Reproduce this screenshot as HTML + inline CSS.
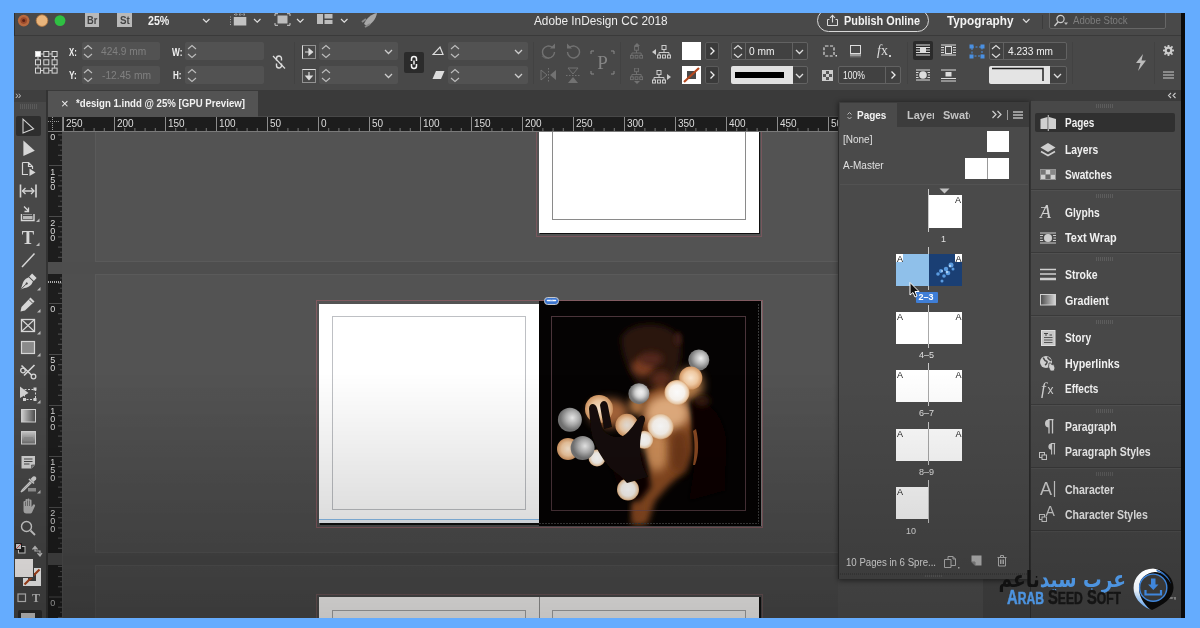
<!DOCTYPE html>
<html><head><meta charset="utf-8"><title>InDesign</title>
<style>
html,body{margin:0;padding:0}
body{width:1200px;height:628px;overflow:hidden;background:#65acfe;font-family:"Liberation Sans",sans-serif;position:relative;color:#e6e6e6;font-size:11px}
.a{position:absolute}
#win{left:14px;top:13px;width:1171px;height:605px;background:#484848;overflow:hidden}
/* coordinates inside #win are offset by (14,13); use wrapper that re-bases to page coords */
#o{position:absolute;left:-14px;top:-13px;width:1200px;height:628px;will-change:transform}
.t{position:absolute;white-space:nowrap;line-height:1}
.b{font-weight:bold}
</style></head><body>
<div id="win" class="a"><div id="o">
<div class="a" style="left:14px;top:13px;width:1171px;height:22px;background:#494949;"></div><div class="a" style="left:14px;top:35px;width:1171px;height:1px;background:#3a3a3a;"></div><div class="a" style="left:14px;top:13px;width:1px;height:23px;background:#303030;"></div><svg class="a" style="left:16px;top:13px;" width="54" height="16" viewBox="0 0 54 16"><circle cx="7.7" cy="7.6" r="5.8" fill="#b8693f"/><circle cx="7.7" cy="7.6" r="3.3" fill="#9a4a2c"/><circle cx="7.7" cy="7.6" r="1.5" fill="#5a2216"/>
<circle cx="26" cy="7.6" r="5.8" fill="#e9b57c"/><circle cx="26" cy="7.6" r="5.8" fill="none" stroke="#b8793f" stroke-width="0.8"/>
<circle cx="44" cy="7.6" r="5.4" fill="#2fc043"/></svg><div class="a" style="left:85px;top:13px;width:14px;height:14px;background:#b9b9b9;"><div class="t" style="left:1.6px;top:2px;font-size:11px;color:#444;font-weight:bold;transform:scaleX(0.843);transform-origin:0 0;">Br</div></div><div class="a" style="left:117px;top:13px;width:15px;height:14px;background:#b9b9b9;"><div class="t" style="left:2.6px;top:2px;font-size:11px;color:#444;font-weight:bold;transform:scaleX(0.891);transform-origin:0 0;">St</div></div><div class="t" style="left:147.5px;top:14.5px;font-size:12px;color:#f0f0f0;font-weight:bold;transform:scaleX(0.887);transform-origin:0 0;">25%</div><svg class="a" style="left:201.5px;top:18px;" width="8.5" height="5.2" viewBox="0 0 8.5 5.2"><path d="M1 1 L4.25 4.2 L7.5 1" fill="none" stroke="#ddd" stroke-width="1.2"/></svg><svg class="a" style="left:229px;top:13px;" width="18" height="14" viewBox="0 0 18 14"><rect x="4.8" y="4" width="12.5" height="8.5" fill="#c2c2c2"/><path d="M5 1.5h12.5" stroke="#aaa" stroke-width="1" stroke-dasharray="1 1.5"/><path d="M1.5 3.5v9" stroke="#aaa" stroke-width="1" stroke-dasharray="1 1.5"/><path d="M7 0v3M11 0v3M15 0v3" stroke="#999" stroke-width="1"/></svg><svg class="a" style="left:252.5px;top:18px;" width="8.5" height="5.2" viewBox="0 0 8.5 5.2"><path d="M1 1 L4.25 4.2 L7.5 1" fill="none" stroke="#ddd" stroke-width="1.2"/></svg><svg class="a" style="left:274px;top:13px;" width="17" height="14" viewBox="0 0 17 14"><rect x="3.5" y="2.5" width="10" height="8" fill="#bdbdbd"/><path d="M1 3V0.7h3M13 0.7h3V3M1 10v2.3h3M13 12.300000000000001h3V10" stroke="#ccc" fill="none" stroke-width="1"/></svg><svg class="a" style="left:295.5px;top:18px;" width="8.5" height="5.2" viewBox="0 0 8.5 5.2"><path d="M1 1 L4.25 4.2 L7.5 1" fill="none" stroke="#ddd" stroke-width="1.2"/></svg><svg class="a" style="left:317px;top:14px;" width="16" height="12" viewBox="0 0 16 12"><rect x="0" y="0" width="6" height="10" fill="#bdbdbd"/><rect x="7.5" y="0" width="8" height="4.5" fill="#bdbdbd"/><rect x="7.5" y="6" width="8" height="4" fill="#bdbdbd"/></svg><svg class="a" style="left:339.5px;top:18px;" width="8.5" height="5.2" viewBox="0 0 8.5 5.2"><path d="M1 1 L4.25 4.2 L7.5 1" fill="none" stroke="#ddd" stroke-width="1.2"/></svg><svg class="a" style="left:361px;top:13px;" width="18" height="15" viewBox="0 0 18 15"><path d="M16 0 C10 1 5 6 3 11 L6 13 C11 11 15 6 16 0Z" fill="#a8a8a8"/><path d="M1 9l4-3M4 14l5-3" stroke="#8a8a8a" stroke-width="2"/></svg><div class="t" style="left:533.8px;top:14.5px;font-size:12px;color:#ededed;transform:scaleX(0.982);transform-origin:0 0;">Adobe InDesign CC 2018</div><div class="a" style="left:817px;top:8.5px;width:112px;height:23px;background:transparent;border:1px solid #d8d8d8;border-radius:12px;box-sizing:border-box"></div><svg class="a" style="left:826px;top:14px;" width="13" height="13" viewBox="0 0 13 13"><path d="M3.5 5.5H1.5V11.5H11.5V5.5H9.5" fill="none" stroke="#ddd" stroke-width="1"/><path d="M6.5 8.5V1.5M4 4L6.5 1.3L9 4" fill="none" stroke="#ddd" stroke-width="1.1"/></svg><div class="t" style="left:844px;top:14.5px;font-size:12px;color:#f2f2f2;font-weight:bold;transform:scaleX(0.905);transform-origin:0 0;">Publish Online</div><div class="t" style="left:946.6px;top:14.5px;font-size:12px;color:#f2f2f2;font-weight:bold;transform:scaleX(0.980);transform-origin:0 0;">Typography</div><svg class="a" style="left:1021.5px;top:18px;" width="8.5" height="5.4" viewBox="0 0 8.5 5.4"><path d="M1 1 L4.25 4.4 L7.5 1" fill="none" stroke="#ddd" stroke-width="1.2"/></svg><div class="a" style="left:1042px;top:15px;width:1px;height:14px;background:#3c3c3c;"></div><div class="a" style="left:1049px;top:10px;width:117px;height:19px;background:#444;border:1px solid #666;border-radius:2px;box-sizing:border-box"></div><svg class="a" style="left:1053px;top:14px;" width="16" height="13" viewBox="0 0 16 13"><circle cx="7.5" cy="5" r="3.6" fill="none" stroke="#ccc" stroke-width="1.2"/><path d="M5 8L1.5 12" stroke="#ccc" stroke-width="1.4"/><path d="M11 8.5h4l-2 2.5z" fill="#bbb"/></svg><div class="t" style="left:1072.5px;top:15px;font-size:11px;color:#7d7d7d;transform:scaleX(0.874);transform-origin:0 0;">Adobe Stock</div>
<div class="a" style="left:14px;top:36px;width:1171px;height:54px;background:#484848;"></div><div class="a" style="left:14px;top:90px;width:1171px;height:1px;background:#404040;"></div><svg class="a" style="left:35px;top:51px;" width="23" height="23" viewBox="0 0 23 23"><rect x="0.5" y="0.5" width="5" height="5" fill="#fff" stroke="#d8d8d8" stroke-width="1"/><rect x="8.8" y="0.5" width="5" height="5" fill="none" stroke="#d8d8d8" stroke-width="1"/><rect x="17.1" y="0.5" width="5" height="5" fill="none" stroke="#d8d8d8" stroke-width="1"/><rect x="0.5" y="8.8" width="5" height="5" fill="none" stroke="#d8d8d8" stroke-width="1"/><rect x="8.8" y="8.8" width="5" height="5" fill="none" stroke="#d8d8d8" stroke-width="1"/><rect x="17.1" y="8.8" width="5" height="5" fill="none" stroke="#d8d8d8" stroke-width="1"/><rect x="0.5" y="17.1" width="5" height="5" fill="none" stroke="#d8d8d8" stroke-width="1"/><rect x="8.8" y="17.1" width="5" height="5" fill="none" stroke="#d8d8d8" stroke-width="1"/><rect x="17.1" y="17.1" width="5" height="5" fill="none" stroke="#d8d8d8" stroke-width="1"/><path d="M6 3h2.5M14.3 3h2.5M6 19.6h2.5M14.3 19.6h2.5M3 6v2.5M3 14.3v2.5M19.6 6v2.5M19.6 14.3v2.5" stroke="#d8d8d8" stroke-width="1"/></svg><div class="t" style="left:69.4px;top:47px;font-size:11px;color:#f0f0f0;font-weight:bold;transform:scaleX(0.709);transform-origin:0 0;">X:</div><div class="t" style="left:69.4px;top:70px;font-size:11px;color:#f0f0f0;font-weight:bold;transform:scaleX(0.766);transform-origin:0 0;">Y:</div><div class="a" style="left:82px;top:42px;width:78px;height:18px;background:#525252;border-radius:2px"></div><svg class="a" style="left:83px;top:44px;" width="10" height="15" viewBox="0 0 10 15"><path d="M1 5 L5 1.5 L9 5 M1 10 L5 13.5 L9 10" fill="none" stroke="#bdbdbd" stroke-width="1.1"/></svg><div class="a" style="left:185px;top:42px;width:79px;height:18px;background:#525252;border-radius:2px"></div><svg class="a" style="left:187px;top:44px;" width="10" height="15" viewBox="0 0 10 15"><path d="M1 5 L5 1.5 L9 5 M1 10 L5 13.5 L9 10" fill="none" stroke="#bdbdbd" stroke-width="1.1"/></svg><div class="a" style="left:82px;top:66px;width:78px;height:18px;background:#525252;border-radius:2px"></div><svg class="a" style="left:83px;top:68px;" width="10" height="15" viewBox="0 0 10 15"><path d="M1 5 L5 1.5 L9 5 M1 10 L5 13.5 L9 10" fill="none" stroke="#bdbdbd" stroke-width="1.1"/></svg><div class="a" style="left:185px;top:66px;width:79px;height:18px;background:#525252;border-radius:2px"></div><svg class="a" style="left:187px;top:68px;" width="10" height="15" viewBox="0 0 10 15"><path d="M1 5 L5 1.5 L9 5 M1 10 L5 13.5 L9 10" fill="none" stroke="#bdbdbd" stroke-width="1.1"/></svg><div class="t" style="left:101px;top:46px;font-size:11px;color:#808080;transform:scaleX(0.924);transform-origin:0 0;">424.9 mm</div><div class="t" style="left:102px;top:70px;font-size:11px;color:#808080;transform:scaleX(0.932);transform-origin:0 0;">-12.45 mm</div><div class="t" style="left:172px;top:47px;font-size:11px;color:#f0f0f0;font-weight:bold;transform:scaleX(0.758);transform-origin:0 0;">W:</div><div class="t" style="left:172.5px;top:70px;font-size:11px;color:#f0f0f0;font-weight:bold;transform:scaleX(0.732);transform-origin:0 0;">H:</div><svg class="a" style="left:271px;top:54px;" width="16" height="16" viewBox="0 0 16 16"><path d="M5.5 6.5V4.5a2.5 2.5 0 0 1 5 0V6.5M10.5 9.5v2a2.5 2.5 0 0 1-5 0v-2" fill="none" stroke="#ddd" stroke-width="1.4"/><path d="M2 2L14 14.5" stroke="#ddd" stroke-width="1.2"/></svg><div class="a" style="left:294px;top:42px;width:1px;height:42px;background:#424242;"></div><svg class="a" style="left:302px;top:45px;" width="14" height="14" viewBox="0 0 14 14"><rect x="0.5" y="0.5" width="13" height="13" fill="none" stroke="#ddd" stroke-width="1" stroke-dasharray="1 1"/><path d="M0.5 0.5V13.5" stroke="#ddd"/><path d="M3 7h6M7 4l3.5 3L7 10z" stroke="#ddd" fill="#ddd" stroke-width="1.2"/></svg><svg class="a" style="left:302px;top:69px;" width="14" height="14" viewBox="0 0 14 14"><rect x="0.5" y="0.5" width="13" height="13" fill="none" stroke="#ddd" stroke-width="1" stroke-dasharray="1 1"/><path d="M0.5 0.5H13.5" stroke="#ddd"/><path d="M7 3v6M4 7l3 3.5L10 7z" stroke="#ddd" fill="#ddd" stroke-width="1.2"/></svg><div class="a" style="left:319px;top:42px;width:79px;height:18px;background:#525252;border-radius:2px"></div><svg class="a" style="left:321px;top:44px;" width="10" height="15" viewBox="0 0 10 15"><path d="M1 5 L5 1.5 L9 5 M1 10 L5 13.5 L9 10" fill="none" stroke="#bdbdbd" stroke-width="1.1"/></svg><svg class="a" style="left:384px;top:49px;" width="9" height="5.5" viewBox="0 0 9 5.5"><path d="M1 1 L4.5 4.5 L8 1" fill="none" stroke="#ccc" stroke-width="1.3"/></svg><div class="a" style="left:448px;top:42px;width:80px;height:18px;background:#525252;border-radius:2px"></div><svg class="a" style="left:450px;top:44px;" width="10" height="15" viewBox="0 0 10 15"><path d="M1 5 L5 1.5 L9 5 M1 10 L5 13.5 L9 10" fill="none" stroke="#bdbdbd" stroke-width="1.1"/></svg><svg class="a" style="left:514px;top:49px;" width="9" height="5.5" viewBox="0 0 9 5.5"><path d="M1 1 L4.5 4.5 L8 1" fill="none" stroke="#ccc" stroke-width="1.3"/></svg><div class="a" style="left:319px;top:66px;width:79px;height:18px;background:#525252;border-radius:2px"></div><svg class="a" style="left:321px;top:68px;" width="10" height="15" viewBox="0 0 10 15"><path d="M1 5 L5 1.5 L9 5 M1 10 L5 13.5 L9 10" fill="none" stroke="#bdbdbd" stroke-width="1.1"/></svg><svg class="a" style="left:384px;top:73px;" width="9" height="5.5" viewBox="0 0 9 5.5"><path d="M1 1 L4.5 4.5 L8 1" fill="none" stroke="#ccc" stroke-width="1.3"/></svg><div class="a" style="left:448px;top:66px;width:80px;height:18px;background:#525252;border-radius:2px"></div><svg class="a" style="left:450px;top:68px;" width="10" height="15" viewBox="0 0 10 15"><path d="M1 5 L5 1.5 L9 5 M1 10 L5 13.5 L9 10" fill="none" stroke="#bdbdbd" stroke-width="1.1"/></svg><svg class="a" style="left:514px;top:73px;" width="9" height="5.5" viewBox="0 0 9 5.5"><path d="M1 1 L4.5 4.5 L8 1" fill="none" stroke="#ccc" stroke-width="1.3"/></svg><div class="a" style="left:404px;top:52px;width:20px;height:21px;background:#2b2b2b;border-radius:2px"></div><svg class="a" style="left:408px;top:55px;" width="12" height="15" viewBox="0 0 12 15"><path d="M3.5 6V4a2.5 2.5 0 0 1 5 0V6M8.5 9v2a2.5 2.5 0 0 1-5 0v-2M6 5.5V9.5" fill="none" stroke="#f4f4f4" stroke-width="1.5"/></svg><svg class="a" style="left:432px;top:45px;" width="12" height="11" viewBox="0 0 12 11"><path d="M1 9.5H11L8 2Z" fill="none" stroke="#ddd" stroke-width="1.2"/></svg><svg class="a" style="left:432px;top:70px;" width="13" height="10" viewBox="0 0 13 10"><path d="M4 1H12.5L9 9H0.5Z" fill="#ddd"/></svg><div class="a" style="left:533px;top:42px;width:1px;height:42px;background:#424242;"></div><svg class="a" style="left:540px;top:43px;" width="17" height="16" viewBox="0 0 17 16"><path d="M12.5 4.5A6 6 0 1 0 14.5 9" fill="none" stroke="#727272" stroke-width="1.4" stroke-dasharray="14 0"/><path d="M10 5.5h5v-5z" fill="#727272"/><path d="M2 13a6 6 0 0 0 10 0" stroke="#727272" stroke-dasharray="1 1.2" fill="none"/></svg><svg class="a" style="left:565px;top:43px;" width="17" height="16" viewBox="0 0 17 16"><g transform="scale(-1,1) translate(-17,0)"><path d="M12.5 4.5A6 6 0 1 0 14.5 9" fill="none" stroke="#727272" stroke-width="1.4"/><path d="M10 5.5h5v-5z" fill="#727272"/></g></svg><svg class="a" style="left:540px;top:68px;" width="17" height="15" viewBox="0 0 17 15"><path d="M1 2v10l6-5z" fill="none" stroke="#727272" stroke-width="1"/><path d="M16 2v10l-6-5z" fill="#727272"/><path d="M8.5 0v15" stroke="#727272" stroke-dasharray="1.5 1.5"/></svg><svg class="a" style="left:566px;top:67px;" width="15" height="17" viewBox="0 0 15 17"><path d="M2 1h10l-5 6z" fill="none" stroke="#727272" stroke-width="1"/><path d="M2 16h10l-5-6z" fill="#727272"/><path d="M0 8.5h15" stroke="#727272" stroke-dasharray="1.5 1.5"/></svg><svg class="a" style="left:590px;top:50px;" width="25" height="25" viewBox="0 0 25 25"><path d="M1 4V1H4M21 1H24V4M1 21V24H4M21 24H24V21" fill="none" stroke="#8a8a8a" stroke-width="1"/><text x="12.5" y="19" text-anchor="middle" font-family="Liberation Serif,serif" font-size="19" fill="#858585">P</text></svg><div class="a" style="left:620px;top:42px;width:1px;height:42px;background:#424242;"></div><svg class="a" style="left:630px;top:43px;" width="14" height="16" viewBox="0 0 14 16"><path d="M4 3h6L7 0z" fill="#727272"/><g transform="translate(0,3.5) scale(0.93)"><rect x="5" y="0" width="4" height="4" fill="none" stroke="#727272"/><path d="M7 4v3M2 10V7h10v3" fill="none" stroke="#727272"/><rect x="0.5" y="9.5" width="3" height="3" fill="none" stroke="#727272"/><rect x="5.5" y="9.5" width="3" height="3" fill="none" stroke="#727272"/><rect x="10.5" y="9.5" width="3" height="3" fill="none" stroke="#727272"/></g></svg><svg class="a" style="left:630px;top:68px;" width="14" height="16" viewBox="0 0 14 16"><g transform="scale(0.93)"><rect x="5" y="0" width="4" height="4" fill="none" stroke="#727272"/><path d="M7 4v3M2 10V7h10v3" fill="none" stroke="#727272"/><rect x="0.5" y="9.5" width="3" height="3" fill="none" stroke="#727272"/><rect x="5.5" y="9.5" width="3" height="3" fill="none" stroke="#727272"/><rect x="10.5" y="9.5" width="3" height="3" fill="none" stroke="#727272"/></g><path d="M4 13h6L7 16z" fill="#727272"/></svg><svg class="a" style="left:652px;top:45px;" width="19" height="14" viewBox="0 0 19 14"><path d="M4 4v6L0 7z" fill="#ccc"/><g transform="translate(5,0.5)"><rect x="5" y="0" width="4" height="4" fill="none" stroke="#ccc"/><path d="M7 4v3M2 10V7h10v3" fill="none" stroke="#ccc"/><rect x="0.5" y="9.5" width="3" height="3" fill="none" stroke="#ccc"/><rect x="5.5" y="9.5" width="3" height="3" fill="none" stroke="#ccc"/><rect x="10.5" y="9.5" width="3" height="3" fill="none" stroke="#ccc"/></g></svg><svg class="a" style="left:652px;top:70px;" width="19" height="14" viewBox="0 0 19 14"><g transform="translate(0,0.5)"><rect x="5" y="0" width="4" height="4" fill="none" stroke="#ccc"/><path d="M7 4v3M2 10V7h10v3" fill="none" stroke="#ccc"/><rect x="0.5" y="9.5" width="3" height="3" fill="none" stroke="#ccc"/><rect x="5.5" y="9.5" width="3" height="3" fill="none" stroke="#ccc"/><rect x="10.5" y="9.5" width="3" height="3" fill="none" stroke="#ccc"/></g><path d="M15 4v6L19 7z" fill="#ccc"/></svg><div class="a" style="left:682px;top:42px;width:19px;height:18px;background:#fff;"></div><div class="a" style="left:705px;top:42px;width:14px;height:18px;background:#3a3a3a;border:1px solid #5a5a5a;box-sizing:border-box;border-radius:2px"></div><svg class="a" style="left:708px;top:46px;" width="8" height="10" viewBox="0 0 8 10"><path d="M2.5 1.5L6 5L2.5 8.5" fill="none" stroke="#eee" stroke-width="1.3"/></svg><div class="a" style="left:682px;top:66px;width:19px;height:18px;background:#fff;"></div><svg class="a" style="left:682px;top:66px;" width="19" height="18" viewBox="0 0 19 18"><rect x="5" y="5" width="9" height="8" fill="#4a4a4a"/><path d="M2 16L17 2" stroke="#b4481f" stroke-width="2.2"/></svg><div class="a" style="left:705px;top:66px;width:14px;height:18px;background:#3a3a3a;border:1px solid #5a5a5a;box-sizing:border-box;border-radius:2px"></div><svg class="a" style="left:708px;top:70px;" width="8" height="10" viewBox="0 0 8 10"><path d="M2.5 1.5L6 5L2.5 8.5" fill="none" stroke="#eee" stroke-width="1.3"/></svg><div class="a" style="left:731px;top:42px;width:77px;height:18px;background:#414141;border:1px solid #626262;box-sizing:border-box;border-radius:2px"></div><div class="a" style="left:745px;top:43px;width:1px;height:16px;background:#626262;"></div><div class="a" style="left:792px;top:43px;width:1px;height:16px;background:#626262;"></div><svg class="a" style="left:733px;top:44px;" width="10" height="15" viewBox="0 0 10 15"><path d="M1 5 L5 1.5 L9 5 M1 10 L5 13.5 L9 10" fill="none" stroke="#ddd" stroke-width="1.1"/></svg><div class="t" style="left:748.8px;top:46px;font-size:11px;color:#f0f0f0;transform:scaleX(0.927);transform-origin:0 0;">0 mm</div><svg class="a" style="left:795px;top:49px;" width="9" height="5.5" viewBox="0 0 9 5.5"><path d="M1 1 L4.5 4.5 L8 1" fill="none" stroke="#ddd" stroke-width="1.3"/></svg><div class="a" style="left:731px;top:66px;width:77px;height:18px;background:#414141;border:1px solid #626262;box-sizing:border-box;border-radius:2px"></div><div class="a" style="left:731px;top:66px;width:62px;height:18px;background:#e2e2e2;border-radius:2px 0 0 2px"></div><div class="a" style="left:735px;top:72px;width:49px;height:6px;background:#000;"></div><svg class="a" style="left:795px;top:73px;" width="9" height="5.5" viewBox="0 0 9 5.5"><path d="M1 1 L4.5 4.5 L8 1" fill="none" stroke="#ddd" stroke-width="1.3"/></svg><svg class="a" style="left:823px;top:45px;" width="15" height="13" viewBox="0 0 15 13"><rect x="1" y="1" width="10" height="10" rx="1.5" fill="none" stroke="#ddd" stroke-width="1.2" stroke-dasharray="3 1.5"/><rect x="12.5" y="10" width="1.5" height="1.5" fill="#ddd"/></svg><svg class="a" style="left:849px;top:45px;" width="13" height="13" viewBox="0 0 13 13"><rect x="1.5" y="0.5" width="10" height="8" fill="#484848" stroke="#ddd" stroke-width="1"/><rect x="1" y="9" width="11" height="2.5" fill="#999"/><rect x="1" y="11.5" width="11" height="1" fill="#666"/></svg><div class="t" style="left:877px;top:44px;font-size:12px;color:#ddd;font-family:'Liberation Serif',serif;font-size:14px"><i>f</i>x</div><div class="a" style="left:889px;top:55px;width:2px;height:2px;background:#ccc;"></div><svg class="a" style="left:822px;top:70px;" width="11" height="11" viewBox="0 0 11 11"><rect x="0.5" y="0.5" width="10" height="10" fill="#555" stroke="#ccc"/><rect x="1" y="1" width="3" height="3" fill="#ccc"/><rect x="7" y="1" width="3" height="3" fill="#ccc"/><rect x="4" y="4" width="3" height="3" fill="#ccc"/><rect x="1" y="7" width="3" height="3" fill="#ccc"/><rect x="7" y="7" width="3" height="3" fill="#ccc"/></svg><div class="a" style="left:838px;top:66px;width:63px;height:18px;background:#414141;border:1px solid #626262;box-sizing:border-box;border-radius:2px"></div><div class="a" style="left:885px;top:67px;width:1px;height:16px;background:#626262;"></div><div class="t" style="left:843px;top:70px;font-size:11px;color:#f0f0f0;transform:scaleX(0.782);transform-origin:0 0;">100%</div><svg class="a" style="left:889px;top:70px;" width="8" height="10" viewBox="0 0 8 10"><path d="M2.5 1.5L6 5L2.5 8.5" fill="none" stroke="#eee" stroke-width="1.3"/></svg><div class="a" style="left:907px;top:42px;width:1px;height:42px;background:#424242;"></div><div class="a" style="left:913px;top:41px;width:20px;height:19px;background:#2b2b2b;border-radius:2px"></div><svg class="a" style="left:916px;top:44px;" width="14" height="13" viewBox="0 0 14 13"><path d="M0 1h14M0 3.5h14M0 6h14M0 8.5h14M0 11h14" stroke="#ddd" stroke-width="1"/><rect x="4" y="3" width="6" height="6" fill="#ddd"/></svg><svg class="a" style="left:941px;top:44px;" width="15" height="13" viewBox="0 0 15 13"><path d="M0 1h15M0 3.5h3M12 3.5h3M0 6h3M12 6h3M0 8.5h3M12 8.5h3M0 11h15" stroke="#ddd" stroke-width="1"/><rect x="4.5" y="2.5" width="6" height="7" fill="none" stroke="#ddd"/></svg><svg class="a" style="left:916px;top:69px;" width="14" height="13" viewBox="0 0 14 13"><path d="M0 1h14M0 3.5h2.5M11.5 3.5h2.5M0 6h2M12 6h2M0 8.5h2.5M11.5 8.5h2.5M0 11h14" stroke="#ddd" stroke-width="1"/><circle cx="7" cy="6" r="3.8" fill="#ddd"/></svg><svg class="a" style="left:941px;top:69px;" width="15" height="13" viewBox="0 0 15 13"><path d="M0 1h15M0 9.5h15M0 12h15" stroke="#ddd" stroke-width="1"/><rect x="4.5" y="3" width="6" height="4.5" fill="#ddd"/></svg><svg class="a" style="left:969px;top:44px;" width="16" height="15" viewBox="0 0 16 15"><path d="M3 3h10v9H3z" fill="none" stroke="#4a90e2" stroke-width="1" stroke-dasharray="2 1.5"/><g fill="#4a90e2"><rect x="0.5" y="0.5" width="4" height="4"/><rect x="11.5" y="0.5" width="4" height="4"/><rect x="0.5" y="10.5" width="4" height="4"/><rect x="11.5" y="10.5" width="4" height="4"/></g></svg><div class="a" style="left:989px;top:42px;width:78px;height:18px;background:#414141;border:1px solid #626262;box-sizing:border-box;border-radius:2px"></div><div class="a" style="left:1003px;top:43px;width:1px;height:16px;background:#626262;"></div><svg class="a" style="left:991px;top:44px;" width="10" height="15" viewBox="0 0 10 15"><path d="M1 5 L5 1.5 L9 5 M1 10 L5 13.5 L9 10" fill="none" stroke="#ddd" stroke-width="1.1"/></svg><div class="t" style="left:1008px;top:46px;font-size:11px;color:#f0f0f0;transform:scaleX(0.920);transform-origin:0 0;">4.233 mm</div><div class="a" style="left:989px;top:66px;width:78px;height:18px;background:#414141;border:1px solid #626262;box-sizing:border-box;border-radius:2px"></div><div class="a" style="left:989px;top:66px;width:61px;height:18px;background:#e4e4e4;border-radius:2px 0 0 2px"></div><svg class="a" style="left:989px;top:66px;" width="61" height="18" viewBox="0 0 61 18"><path d="M3 2.5H54V15" fill="none" stroke="#222" stroke-width="1.5"/></svg><svg class="a" style="left:1053px;top:73px;" width="9" height="5.5" viewBox="0 0 9 5.5"><path d="M1 1 L4.5 4.5 L8 1" fill="none" stroke="#ddd" stroke-width="1.3"/></svg><div class="a" style="left:1072px;top:42px;width:1px;height:42px;background:#424242;"></div><div class="a" style="left:1154px;top:42px;width:1px;height:42px;background:#424242;"></div><svg class="a" style="left:1135px;top:54px;" width="12" height="17" viewBox="0 0 12 17"><path d="M8 0L1 9h4.5L3 17L11 6.5H6.5Z" fill="#bbb"/></svg><svg class="a" style="left:1163px;top:45px;" width="11" height="11" viewBox="0 0 11 11"><circle cx="5.5" cy="5.5" r="2.8" fill="none" stroke="#ccc" stroke-width="2.2"/><rect x="4.6" y="-0.2" width="1.8" height="2.4" fill="#ccc" transform="rotate(0 5.5 5.5)"/><rect x="4.6" y="-0.2" width="1.8" height="2.4" fill="#ccc" transform="rotate(45 5.5 5.5)"/><rect x="4.6" y="-0.2" width="1.8" height="2.4" fill="#ccc" transform="rotate(90 5.5 5.5)"/><rect x="4.6" y="-0.2" width="1.8" height="2.4" fill="#ccc" transform="rotate(135 5.5 5.5)"/><rect x="4.6" y="-0.2" width="1.8" height="2.4" fill="#ccc" transform="rotate(180 5.5 5.5)"/><rect x="4.6" y="-0.2" width="1.8" height="2.4" fill="#ccc" transform="rotate(225 5.5 5.5)"/><rect x="4.6" y="-0.2" width="1.8" height="2.4" fill="#ccc" transform="rotate(270 5.5 5.5)"/><rect x="4.6" y="-0.2" width="1.8" height="2.4" fill="#ccc" transform="rotate(315 5.5 5.5)"/></svg><svg class="a" style="left:1163px;top:71px;" width="12" height="8" viewBox="0 0 12 8"><path d="M0 1h11M0 4h11M0 7h11" stroke="#ccc" stroke-width="1.2"/></svg>
<div class="a" style="left:14px;top:90px;width:1171px;height:26px;background:#3a3a3a;"></div><div class="a" style="left:48px;top:91px;width:210px;height:26px;background:#535353;"></div><div class="t" style="left:61px;top:97px;font-size:13px;color:#eee;">&#215;</div><div class="t" style="left:76.3px;top:98px;font-size:11px;color:#f2f2f2;font-weight:bold;transform:scaleX(0.876);transform-origin:0 0;">*design 1.indd @ 25% [GPU Preview]</div>
<div class="a" style="left:14px;top:90px;width:32px;height:528px;background:#484848;"></div><div class="a" style="left:46px;top:90px;width:2px;height:528px;background:#333;"></div><div class="a" style="left:14px;top:90px;width:32px;height:12px;background:#3f3f3f;"></div><div class="t" style="left:15px;top:90px;font-size:11px;color:#bbb;letter-spacing:-1px">&#8250;&#8250;</div><div class="a" style="left:20px;top:104px;width:18px;height:5px;background:transparent;background-image:repeating-linear-gradient(90deg,#5a5a5a 0 1px,transparent 1px 2px)"></div><div class="a" style="left:16px;top:116px;width:25px;height:20px;background:#2e2e2e;border-radius:2px;background-image:radial-gradient(#3a3a3a 0.5px,transparent 0.6px);background-size:2px 2px"></div><svg class="a" style="left:21px;top:118px;" width="14" height="16" viewBox="0 0 14 16"><path d="M2 1.2V15L12.6 10.8Z" fill="none" stroke="#d6d6d6" stroke-width="1.05" stroke-linejoin="miter"/></svg><svg class="a" style="left:22px;top:140px;" width="13" height="17" viewBox="0 0 13 17"><path d="M1.4 0.5V16L12.8 10.8Z" fill="#d6d6d6"/></svg><svg class="a" style="left:21px;top:162px;" width="16" height="15" viewBox="0 0 16 15"><path d="M1.5 0.5H7.5L11.5 4.5V7M7.5 0.5V4.5H11.5M1.5 0.5V12.5H7" fill="none" stroke="#d6d6d6" stroke-width="1.2"/><path d="M8.5 6.5V14L14.5 10.5Z" fill="#d6d6d6"/></svg><svg class="a" style="left:19px;top:184px;" width="19" height="14" viewBox="0 0 19 14"><path d="M1.5 0.5V13.5M17 0.5V13.5M3.5 7H15" stroke="#d6d6d6" stroke-width="1.6" fill="none"/><path d="M6.5 4L3.5 7L6.5 10M12 4L15 7L12 10" stroke="#d6d6d6" stroke-width="1.3" fill="none"/></svg><svg class="a" style="left:20px;top:206px;" width="20" height="17" viewBox="0 0 20 17"><path d="M1.5 8V14.5H14V8" fill="none" stroke="#d6d6d6" stroke-width="1.4"/><rect x="3" y="10" width="9.5" height="3" fill="#d6d6d6" opacity="0.8"/><path d="M3.5 8.5h8.5" stroke="#d6d6d6" stroke-dasharray="1 1"/><path d="M4 0.5L8.5 5M8.5 1.5V5.5H4.5" stroke="#d6d6d6" stroke-width="1.3" fill="none"/><path d="M16 16h3.5v-3.5z" fill="#bbb"/></svg><svg class="a" style="left:20px;top:230px;" width="20" height="17" viewBox="0 0 20 17"><text x="8" y="14" text-anchor="middle" font-family="Liberation Serif,serif" font-weight="bold" font-size="18.5" fill="#d6d6d6">T</text><path d="M16 16h3.5v-3.5z" fill="#bbb"/></svg><svg class="a" style="left:21px;top:252px;" width="15" height="16" viewBox="0 0 15 16"><path d="M1 15L13.5 1.5" stroke="#d6d6d6" stroke-width="1.5"/></svg><svg class="a" style="left:20px;top:273px;" width="21" height="18" viewBox="0 0 21 18"><g transform="translate(8,9.2) rotate(45)"><path d="M0 10.5 C-1 7 -4.5 4 -4 -1 L-3 -4 H3 L4 -1 C4.5 4 1 7 0 10.5Z" fill="#d6d6d6"/><rect x="-3.2" y="-9" width="6.4" height="4" fill="#d6d6d6"/><path d="M0 10V2.5" stroke="#484848" stroke-width="0.9"/><circle cx="0" cy="1.8" r="1.1" fill="#484848"/></g><path d="M17 17.5h3.5v-3.5z" fill="#bbb"/></svg><svg class="a" style="left:20px;top:296px;" width="21" height="17" viewBox="0 0 21 17"><path d="M10.5 1.5L14.5 5.5L5 14.5L0.5 15.5L1.5 11Z" fill="#d6d6d6"/><path d="M9 3.5L12.5 7" stroke="#484848" stroke-width="1"/><path d="M17 16.5h3.5v-3.5z" fill="#bbb"/></svg><svg class="a" style="left:20px;top:318px;" width="21" height="17" viewBox="0 0 21 17"><rect x="1.5" y="1.5" width="13" height="12" fill="none" stroke="#d6d6d6" stroke-width="1.3"/><path d="M1.5 1.5L14.5 13.5M14.5 1.5L1.5 13.5" stroke="#d6d6d6" stroke-width="1.1"/><path d="M17 16.5h3.5v-3.5z" fill="#bbb"/></svg><svg class="a" style="left:20px;top:340px;" width="21" height="17" viewBox="0 0 21 17"><rect x="1.5" y="1.5" width="13" height="12" fill="#8a8a8a" stroke="#d6d6d6" stroke-width="1.2"/><path d="M17 16.5h3.5v-3.5z" fill="#bbb"/></svg><svg class="a" style="left:20px;top:364px;" width="18" height="16" viewBox="0 0 18 16"><path d="M1.5 1.5L12 11.5M14.5 1L4 11.5" stroke="#d6d6d6" stroke-width="1.6"/><circle cx="13.5" cy="12.5" r="2.3" fill="none" stroke="#d6d6d6" stroke-width="1.3"/><circle cx="3" cy="12.5" r="2.3" fill="none" stroke="#d6d6d6" stroke-width="1.3" transform="translate(0,-6)"/></svg><svg class="a" style="left:19px;top:386px;" width="22" height="18" viewBox="0 0 22 18"><rect x="5.5" y="3.5" width="11" height="10" fill="none" stroke="#d6d6d6" stroke-width="1" stroke-dasharray="2 1.5"/><rect x="14.5" y="1.5" width="3" height="3" fill="#d6d6d6"/><rect x="14.5" y="12" width="3" height="3" fill="#d6d6d6"/><rect x="4" y="12" width="3" height="3" fill="#d6d6d6"/><path d="M1 0.5V12L9.5 7Z" fill="#d6d6d6"/><path d="M18 17.5h3.5v-3.5z" fill="#bbb"/></svg><svg class="a" style="left:21px;top:409px;" width="15" height="14" viewBox="0 0 15 14"><defs><linearGradient id="gs1"><stop offset="0" stop-color="#d8d8d8"/><stop offset="1" stop-color="#4c4c4c"/></linearGradient></defs><rect x="0.5" y="0.5" width="14" height="12.5" fill="url(#gs1)" stroke="#d6d6d6" stroke-width="1"/></svg><svg class="a" style="left:21px;top:431px;" width="15" height="14" viewBox="0 0 15 14"><defs><linearGradient id="gs2" x2="0" y2="1"><stop offset="0" stop-color="#cfcfcf"/><stop offset="1" stop-color="#6a6a6a"/></linearGradient></defs><rect x="0.5" y="0.5" width="14" height="12.5" fill="url(#gs2)" stroke="#d6d6d6" stroke-width="1"/><rect x="3" y="6" width="9" height="4" fill="#8c8c8c" opacity="0.7"/></svg><svg class="a" style="left:21px;top:455px;" width="15" height="15" viewBox="0 0 15 15"><path d="M0.5 1H14V10L10.5 13.5H0.5Z" fill="#d6d6d6"/><path d="M3 4h8.5M3 6.5h8.5M3 9h5.5" stroke="#484848" stroke-width="1.1"/><path d="M10.5 13.5V10H14" fill="#888" stroke="#484848" stroke-width="0.6"/></svg><svg class="a" style="left:19px;top:475px;" width="22" height="19" viewBox="0 0 22 19"><path d="M14 1.5a2.2 2.2 0 0 1 3 3L14.5 7L11.5 4Z" fill="#d6d6d6"/><path d="M10 4L15 8.5" stroke="#d6d6d6" stroke-width="1.6"/><path d="M11.5 6.5L3.5 14.5L2 17L4.5 15.5L12.5 7.5" fill="none" stroke="#d6d6d6" stroke-width="1.2"/><rect x="9" y="13" width="8" height="3.5" fill="#9a9a9a"/><path d="M18 18.5h3.5v-3.5z" fill="#bbb"/></svg><svg class="a" style="left:20px;top:498px;" width="17" height="16" viewBox="0 0 17 16"><path d="M3.5 9V4a1 1 0 0 1 2 0V2a1 1 0 0 1 2 0V1.5a1 1 0 0 1 2 0V2.5a1 1 0 0 1 2 0V9L13 7a1 1 0 0 1 2 1L12 14.5a2 2 0 0 1 -2 1H6.5a3 3 0 0 1 -3-3Z" fill="#b4b4b4"/><path d="M5.5 4V8M7.5 2.5V8M9.5 2.5V8" stroke="#484848" stroke-width="0.6"/></svg><svg class="a" style="left:20px;top:520px;" width="17" height="16" viewBox="0 0 17 16"><circle cx="6.5" cy="6.5" r="5" fill="none" stroke="#d6d6d6" stroke-width="1.4"/><path d="M10.5 10.5L15 15" stroke="#d6d6d6" stroke-width="1.8"/></svg><svg class="a" style="left:15px;top:543px;" width="11" height="11" viewBox="0 0 11 11"><rect x="3.5" y="3.5" width="6.5" height="6.5" fill="#222" stroke="#ddd"/><rect x="0.5" y="0.5" width="6" height="6" fill="#ddd" stroke="#222"/><path d="M1 6L6 1" stroke="#c33" stroke-width="0.8"/></svg><svg class="a" style="left:31px;top:545px;" width="12" height="12" viewBox="0 0 12 12"><path d="M1.5 4.5L4 1.5L6.5 4.5M4 2V6H9V10.5M6.5 8L9 11L11 8" fill="none" stroke="#ccc" stroke-width="1.2"/></svg><div class="a" style="left:23px;top:568px;width:18px;height:18px;background:#fff;"></div><svg class="a" style="left:23px;top:568px;" width="18" height="18" viewBox="0 0 18 18"><rect x="0" y="0" width="18" height="18" fill="#fff"/><rect x="5" y="5" width="8" height="8" fill="#484848"/><path d="M1.5 16.5L16.5 1.5" stroke="#b4481f" stroke-width="2.2"/></svg><div class="a" style="left:15px;top:559px;width:18px;height:18px;background:#fffcfa;box-shadow:0 0 0 1px #484848"></div><svg class="a" style="left:17px;top:593px;" width="10" height="10" viewBox="0 0 10 10"><rect x="1" y="1" width="7.5" height="7.5" fill="none" stroke="#ccc" stroke-width="1.2"/></svg><div class="t" style="left:32px;top:592px;font-size:11px;color:#ccc;font-weight:bold;font-family:'Liberation Serif',serif;font-size:12px">T</div><div class="a" style="left:18px;top:610px;width:24px;height:8px;background:#2e2e2e;border-radius:2px 2px 0 0"></div><div class="a" style="left:21px;top:613px;width:14px;height:5px;background:#ccc;"></div>
<div class="a" style="left:48px;top:117px;width:790px;height:15px;background:#1d1d1d;"></div><div class="a" style="left:48px;top:131px;width:14px;height:487px;background:#1d1d1d;"></div><div class="a" style="left:48px;top:131px;width:790px;height:1px;background:#7a7a7a;"></div><div class="a" style="left:62px;top:117px;width:1px;height:15px;background:#7a7a7a;"></div><svg class="a" style="left:48px;top:116px;" width="14" height="15" viewBox="0 0 14 15"><path d="M0 5.5H12M4.5 1V14" stroke="#999"stroke-width="1" stroke-dasharray="1 1"/></svg><svg class="a" style="left:48px;top:116px;" width="790" height="15" viewBox="0 0 790 15"><rect x="15.0" y="1" width="1" height="14" fill="#8c8c8c"/><rect x="25.2" y="12" width="1" height="3" fill="#777"/><rect x="35.4" y="12" width="1" height="3" fill="#777"/><rect x="45.6" y="12" width="1" height="3" fill="#777"/><rect x="55.8" y="12" width="1" height="3" fill="#777"/><rect x="66.0" y="1" width="1" height="14" fill="#8c8c8c"/><rect x="76.2" y="12" width="1" height="3" fill="#777"/><rect x="86.4" y="12" width="1" height="3" fill="#777"/><rect x="96.6" y="12" width="1" height="3" fill="#777"/><rect x="106.8" y="12" width="1" height="3" fill="#777"/><rect x="117.0" y="1" width="1" height="14" fill="#8c8c8c"/><rect x="127.2" y="12" width="1" height="3" fill="#777"/><rect x="137.4" y="12" width="1" height="3" fill="#777"/><rect x="147.6" y="12" width="1" height="3" fill="#777"/><rect x="157.8" y="12" width="1" height="3" fill="#777"/><rect x="168.0" y="1" width="1" height="14" fill="#8c8c8c"/><rect x="178.2" y="12" width="1" height="3" fill="#777"/><rect x="188.4" y="12" width="1" height="3" fill="#777"/><rect x="198.6" y="12" width="1" height="3" fill="#777"/><rect x="208.8" y="12" width="1" height="3" fill="#777"/><rect x="219.0" y="1" width="1" height="14" fill="#8c8c8c"/><rect x="229.2" y="12" width="1" height="3" fill="#777"/><rect x="239.4" y="12" width="1" height="3" fill="#777"/><rect x="249.6" y="12" width="1" height="3" fill="#777"/><rect x="259.8" y="12" width="1" height="3" fill="#777"/><rect x="270.0" y="1" width="1" height="14" fill="#8c8c8c"/><rect x="280.2" y="12" width="1" height="3" fill="#777"/><rect x="290.4" y="12" width="1" height="3" fill="#777"/><rect x="300.6" y="12" width="1" height="3" fill="#777"/><rect x="310.8" y="12" width="1" height="3" fill="#777"/><rect x="321.0" y="1" width="1" height="14" fill="#8c8c8c"/><rect x="331.2" y="12" width="1" height="3" fill="#777"/><rect x="341.4" y="12" width="1" height="3" fill="#777"/><rect x="351.6" y="12" width="1" height="3" fill="#777"/><rect x="361.8" y="12" width="1" height="3" fill="#777"/><rect x="372.0" y="1" width="1" height="14" fill="#8c8c8c"/><rect x="382.2" y="12" width="1" height="3" fill="#777"/><rect x="392.4" y="12" width="1" height="3" fill="#777"/><rect x="402.6" y="12" width="1" height="3" fill="#777"/><rect x="412.8" y="12" width="1" height="3" fill="#777"/><rect x="423.0" y="1" width="1" height="14" fill="#8c8c8c"/><rect x="433.2" y="12" width="1" height="3" fill="#777"/><rect x="443.4" y="12" width="1" height="3" fill="#777"/><rect x="453.6" y="12" width="1" height="3" fill="#777"/><rect x="463.8" y="12" width="1" height="3" fill="#777"/><rect x="474.0" y="1" width="1" height="14" fill="#8c8c8c"/><rect x="484.2" y="12" width="1" height="3" fill="#777"/><rect x="494.4" y="12" width="1" height="3" fill="#777"/><rect x="504.6" y="12" width="1" height="3" fill="#777"/><rect x="514.8" y="12" width="1" height="3" fill="#777"/><rect x="525.0" y="1" width="1" height="14" fill="#8c8c8c"/><rect x="535.2" y="12" width="1" height="3" fill="#777"/><rect x="545.4" y="12" width="1" height="3" fill="#777"/><rect x="555.6" y="12" width="1" height="3" fill="#777"/><rect x="565.8" y="12" width="1" height="3" fill="#777"/><rect x="576.0" y="1" width="1" height="14" fill="#8c8c8c"/><rect x="586.2" y="12" width="1" height="3" fill="#777"/><rect x="596.4" y="12" width="1" height="3" fill="#777"/><rect x="606.6" y="12" width="1" height="3" fill="#777"/><rect x="616.8" y="12" width="1" height="3" fill="#777"/><rect x="627.0" y="1" width="1" height="14" fill="#8c8c8c"/><rect x="637.2" y="12" width="1" height="3" fill="#777"/><rect x="647.4" y="12" width="1" height="3" fill="#777"/><rect x="657.6" y="12" width="1" height="3" fill="#777"/><rect x="667.8" y="12" width="1" height="3" fill="#777"/><rect x="678.0" y="1" width="1" height="14" fill="#8c8c8c"/><rect x="688.2" y="12" width="1" height="3" fill="#777"/><rect x="698.4" y="12" width="1" height="3" fill="#777"/><rect x="708.6" y="12" width="1" height="3" fill="#777"/><rect x="718.8" y="12" width="1" height="3" fill="#777"/><rect x="729.0" y="1" width="1" height="14" fill="#8c8c8c"/><rect x="739.2" y="12" width="1" height="3" fill="#777"/><rect x="749.4" y="12" width="1" height="3" fill="#777"/><rect x="759.6" y="12" width="1" height="3" fill="#777"/><rect x="769.8" y="12" width="1" height="3" fill="#777"/><rect x="780.0" y="1" width="1" height="14" fill="#8c8c8c"/></svg><div class="t" style="left:66.0px;top:119px;font-size:10px;color:#dcdcdc;overflow:hidden;max-width:772px">250</div><div class="t" style="left:117.0px;top:119px;font-size:10px;color:#dcdcdc;overflow:hidden;max-width:721px">200</div><div class="t" style="left:168.0px;top:119px;font-size:10px;color:#dcdcdc;overflow:hidden;max-width:670px">150</div><div class="t" style="left:219.0px;top:119px;font-size:10px;color:#dcdcdc;overflow:hidden;max-width:619px">100</div><div class="t" style="left:270.0px;top:119px;font-size:10px;color:#dcdcdc;overflow:hidden;max-width:568px">50</div><div class="t" style="left:321.0px;top:119px;font-size:10px;color:#dcdcdc;overflow:hidden;max-width:517px">0</div><div class="t" style="left:372.0px;top:119px;font-size:10px;color:#dcdcdc;overflow:hidden;max-width:466px">50</div><div class="t" style="left:423.0px;top:119px;font-size:10px;color:#dcdcdc;overflow:hidden;max-width:415px">100</div><div class="t" style="left:474.0px;top:119px;font-size:10px;color:#dcdcdc;overflow:hidden;max-width:364px">150</div><div class="t" style="left:525.0px;top:119px;font-size:10px;color:#dcdcdc;overflow:hidden;max-width:313px">200</div><div class="t" style="left:576.0px;top:119px;font-size:10px;color:#dcdcdc;overflow:hidden;max-width:262px">250</div><div class="t" style="left:627.0px;top:119px;font-size:10px;color:#dcdcdc;overflow:hidden;max-width:211px">300</div><div class="t" style="left:678.0px;top:119px;font-size:10px;color:#dcdcdc;overflow:hidden;max-width:160px">350</div><div class="t" style="left:729.0px;top:119px;font-size:10px;color:#dcdcdc;overflow:hidden;max-width:109px">400</div><div class="t" style="left:780.0px;top:119px;font-size:10px;color:#dcdcdc;overflow:hidden;max-width:58px">450</div><div class="t" style="left:831.0px;top:119px;font-size:10px;color:#dcdcdc;overflow:hidden;max-width:7px">500</div><svg class="a" style="left:48px;top:131px;" width="14" height="487" viewBox="0 0 14 487"><rect x="10" y="3.4" width="4" height="1" fill="#555"/><rect x="12" y="8.5" width="2" height="1" fill="#484848"/><rect x="10" y="13.6" width="4" height="1" fill="#555"/><rect x="12" y="18.7" width="2" height="1" fill="#484848"/><rect x="10" y="23.8" width="4" height="1" fill="#555"/><rect x="12" y="28.9" width="2" height="1" fill="#484848"/><rect x="1" y="34.0" width="13" height="1" fill="#4c4c4c"/><rect x="12" y="39.1" width="2" height="1" fill="#484848"/><rect x="10" y="44.2" width="4" height="1" fill="#555"/><rect x="12" y="49.3" width="2" height="1" fill="#484848"/><rect x="10" y="54.4" width="4" height="1" fill="#555"/><rect x="12" y="59.5" width="2" height="1" fill="#484848"/><rect x="10" y="64.6" width="4" height="1" fill="#555"/><rect x="12" y="69.7" width="2" height="1" fill="#484848"/><rect x="10" y="74.8" width="4" height="1" fill="#555"/><rect x="12" y="79.9" width="2" height="1" fill="#484848"/><rect x="1" y="85.0" width="13" height="1" fill="#4c4c4c"/><rect x="12" y="90.1" width="2" height="1" fill="#484848"/><rect x="10" y="95.2" width="4" height="1" fill="#555"/><rect x="12" y="100.3" width="2" height="1" fill="#484848"/><rect x="10" y="105.4" width="4" height="1" fill="#555"/><rect x="12" y="110.5" width="2" height="1" fill="#484848"/><rect x="10" y="115.6" width="4" height="1" fill="#555"/><rect x="12" y="120.7" width="2" height="1" fill="#484848"/><rect x="10" y="125.8" width="4" height="1" fill="#555"/><rect x="12" y="146.5" width="2" height="1" fill="#484848"/><rect x="10" y="151.6" width="4" height="1" fill="#555"/><rect x="12" y="156.7" width="2" height="1" fill="#484848"/><rect x="10" y="161.8" width="4" height="1" fill="#555"/><rect x="12" y="166.9" width="2" height="1" fill="#484848"/><rect x="1" y="172.0" width="13" height="1" fill="#4c4c4c"/><rect x="12" y="177.1" width="2" height="1" fill="#484848"/><rect x="10" y="182.2" width="4" height="1" fill="#555"/><rect x="12" y="187.3" width="2" height="1" fill="#484848"/><rect x="10" y="192.4" width="4" height="1" fill="#555"/><rect x="12" y="197.5" width="2" height="1" fill="#484848"/><rect x="10" y="202.6" width="4" height="1" fill="#555"/><rect x="12" y="207.7" width="2" height="1" fill="#484848"/><rect x="10" y="212.8" width="4" height="1" fill="#555"/><rect x="12" y="217.9" width="2" height="1" fill="#484848"/><rect x="1" y="223.0" width="13" height="1" fill="#4c4c4c"/><rect x="12" y="228.1" width="2" height="1" fill="#484848"/><rect x="10" y="233.2" width="4" height="1" fill="#555"/><rect x="12" y="238.3" width="2" height="1" fill="#484848"/><rect x="10" y="243.4" width="4" height="1" fill="#555"/><rect x="12" y="248.5" width="2" height="1" fill="#484848"/><rect x="10" y="253.6" width="4" height="1" fill="#555"/><rect x="12" y="258.7" width="2" height="1" fill="#484848"/><rect x="10" y="263.8" width="4" height="1" fill="#555"/><rect x="12" y="268.9" width="2" height="1" fill="#484848"/><rect x="1" y="274.0" width="13" height="1" fill="#4c4c4c"/><rect x="12" y="279.1" width="2" height="1" fill="#484848"/><rect x="10" y="284.2" width="4" height="1" fill="#555"/><rect x="12" y="289.3" width="2" height="1" fill="#484848"/><rect x="10" y="294.4" width="4" height="1" fill="#555"/><rect x="12" y="299.5" width="2" height="1" fill="#484848"/><rect x="10" y="304.6" width="4" height="1" fill="#555"/><rect x="12" y="309.7" width="2" height="1" fill="#484848"/><rect x="10" y="314.8" width="4" height="1" fill="#555"/><rect x="12" y="319.9" width="2" height="1" fill="#484848"/><rect x="1" y="325.0" width="13" height="1" fill="#4c4c4c"/><rect x="12" y="330.1" width="2" height="1" fill="#484848"/><rect x="10" y="335.2" width="4" height="1" fill="#555"/><rect x="12" y="340.3" width="2" height="1" fill="#484848"/><rect x="10" y="345.4" width="4" height="1" fill="#555"/><rect x="12" y="350.5" width="2" height="1" fill="#484848"/><rect x="10" y="355.6" width="4" height="1" fill="#555"/><rect x="12" y="360.7" width="2" height="1" fill="#484848"/><rect x="10" y="365.8" width="4" height="1" fill="#555"/><rect x="12" y="370.9" width="2" height="1" fill="#484848"/><rect x="1" y="376.0" width="13" height="1" fill="#4c4c4c"/><rect x="12" y="381.1" width="2" height="1" fill="#484848"/><rect x="10" y="386.2" width="4" height="1" fill="#555"/><rect x="12" y="391.3" width="2" height="1" fill="#484848"/><rect x="10" y="396.4" width="4" height="1" fill="#555"/><rect x="12" y="401.5" width="2" height="1" fill="#484848"/><rect x="10" y="406.6" width="4" height="1" fill="#555"/><rect x="12" y="411.7" width="2" height="1" fill="#484848"/><rect x="10" y="416.8" width="4" height="1" fill="#555"/><rect x="10" y="434.9" width="4" height="1" fill="#555"/><rect x="12" y="440.0" width="2" height="1" fill="#484848"/><rect x="10" y="445.1" width="4" height="1" fill="#555"/><rect x="12" y="450.2" width="2" height="1" fill="#484848"/><rect x="10" y="455.3" width="4" height="1" fill="#555"/><rect x="12" y="460.4" width="2" height="1" fill="#484848"/><rect x="1" y="465.5" width="13" height="1" fill="#4c4c4c"/><rect x="12" y="470.6" width="2" height="1" fill="#484848"/><rect x="10" y="475.7" width="4" height="1" fill="#555"/><rect x="12" y="480.8" width="2" height="1" fill="#484848"/><rect x="10" y="485.9" width="4" height="1" fill="#555"/></svg><div class="a" style="left:48px;top:262px;width:14px;height:12px;background:#4d4d4d;"></div><div class="a" style="left:48px;top:553px;width:14px;height:12px;background:#454545;"></div><div class="t" style="left:50.3px;top:133.3px;font-size:9px;color:#d8d8d8;">0</div><div class="t" style="left:50.3px;top:167.8px;font-size:9px;color:#d8d8d8;">1</div><div class="t" style="left:50.3px;top:175.60000000000002px;font-size:9px;color:#d8d8d8;">5</div><div class="t" style="left:50.3px;top:183.4px;font-size:9px;color:#d8d8d8;">0</div><div class="t" style="left:50.3px;top:218.8px;font-size:9px;color:#d8d8d8;">2</div><div class="t" style="left:50.3px;top:226.60000000000002px;font-size:9px;color:#d8d8d8;">0</div><div class="t" style="left:50.3px;top:234.4px;font-size:9px;color:#d8d8d8;">0</div><div class="t" style="left:50.3px;top:305.3px;font-size:9px;color:#d8d8d8;">0</div><div class="t" style="left:50.3px;top:356.3px;font-size:9px;color:#d8d8d8;">5</div><div class="t" style="left:50.3px;top:364.1px;font-size:9px;color:#d8d8d8;">0</div><div class="t" style="left:50.3px;top:407.3px;font-size:9px;color:#d8d8d8;">1</div><div class="t" style="left:50.3px;top:415.1px;font-size:9px;color:#d8d8d8;">0</div><div class="t" style="left:50.3px;top:422.90000000000003px;font-size:9px;color:#d8d8d8;">0</div><div class="t" style="left:50.3px;top:458.3px;font-size:9px;color:#d8d8d8;">1</div><div class="t" style="left:50.3px;top:466.1px;font-size:9px;color:#d8d8d8;">5</div><div class="t" style="left:50.3px;top:473.90000000000003px;font-size:9px;color:#d8d8d8;">0</div><div class="t" style="left:50.3px;top:509.3px;font-size:9px;color:#d8d8d8;">2</div><div class="t" style="left:50.3px;top:517.0999999999999px;font-size:9px;color:#d8d8d8;">0</div><div class="t" style="left:50.3px;top:524.9px;font-size:9px;color:#d8d8d8;">0</div><div class="t" style="left:50.3px;top:599.3px;font-size:9px;color:#b0b0b0;">0</div><svg class="a" style="left:48px;top:281px;" width="14" height="2" viewBox="0 0 14 2"><path d="M0 1H14" stroke="#ddd" stroke-width="1.5" stroke-dasharray="1 1"/></svg>
<div class="a" style="left:62px;top:132px;width:776px;height:486px;background:#4f4f4f;"></div><div class="a" style="left:95px;top:132px;width:743px;height:130px;background:#535353;border-left:1px solid #5a5a5a;border-bottom:1px solid #5a5a5a;box-sizing:border-box"></div><div class="a" style="left:95px;top:274px;width:743px;height:279px;background:#535353;border:1px solid #5a5a5a;border-right:none;box-sizing:border-box"></div><div class="a" style="left:95px;top:565px;width:743px;height:53px;background:#535353;border-left:1px solid #5a5a5a;border-top:1px solid #5a5a5a;box-sizing:border-box"></div><div class="a" style="left:62px;top:132px;width:33px;height:486px;background:#4f4f4f;"></div><div class="a" style="left:62px;top:262px;width:776px;height:12px;background:#4e4e4e;"></div><div class="a" style="left:62px;top:553px;width:776px;height:12px;background:#4e4e4e;"></div><div class="a" style="left:63px;top:132px;width:775px;height:486px;background:transparent;background:linear-gradient(to bottom,rgba(0,0,0,0) 240px,rgba(0,0,0,0.1) 486px)"></div><div class="a" style="left:536px;top:132px;width:226px;height:105px;background:transparent;border:1px solid rgba(150,90,100,0.55);border-top:none;box-sizing:border-box"></div><div class="a" style="left:540px;top:132px;width:220px;height:102px;background:#111;"></div><div class="a" style="left:539px;top:132px;width:220px;height:101px;background:#fff;"></div><div class="a" style="left:552px;top:132px;width:194px;height:88px;background:transparent;border:1px solid #8a8a8a;border-top:none;box-sizing:border-box"></div><div class="a" style="left:316px;top:300px;width:447px;height:228px;background:transparent;border:1px solid rgba(160,95,105,0.6);box-sizing:border-box"></div><div class="a" style="left:320px;top:304px;width:220px;height:221px;background:#111;"></div><div class="a" style="left:319px;top:303.5px;width:220px;height:219.5px;background:#fff;"></div><div class="a" style="left:332px;top:316px;width:194px;height:194px;background:transparent;border:1px solid #bec0c4;box-sizing:border-box"></div><div class="a" style="left:319px;top:519px;width:220px;height:1px;background:#8cc0ee;"></div><div class="a" style="left:319px;top:520px;width:220px;height:3px;background:#eef3f8;"></div><svg class="a" style="left:539px;top:301px;" width="222" height="225" viewBox="0 0 222 225"><defs>
<filter id="bl2" x="-50%" y="-50%" width="200%" height="200%"><feGaussianBlur stdDeviation="2"/></filter>
<filter id="bl3" x="-50%" y="-50%" width="200%" height="200%"><feGaussianBlur stdDeviation="3"/></filter>
<filter id="bl5" x="-50%" y="-50%" width="200%" height="200%"><feGaussianBlur stdDeviation="5"/></filter>
<filter id="bl1" x="-50%" y="-50%" width="200%" height="200%"><feGaussianBlur stdDeviation="0.7"/></filter>
<radialGradient id="bw"><stop offset="0" stop-color="#fff"/><stop offset="0.6" stop-color="#fbf6f0"/><stop offset="0.88" stop-color="#efd2b2"/><stop offset="1" stop-color="#dca878"/></radialGradient>
<radialGradient id="bp"><stop offset="0" stop-color="#fae6d0"/><stop offset="0.6" stop-color="#efc8a0"/><stop offset="1" stop-color="#d09460"/></radialGradient>
<radialGradient id="bg" cx="0.6" cy="0.42"><stop offset="0" stop-color="#f0f0f0"/><stop offset="0.55" stop-color="#b4b4b4"/><stop offset="1" stop-color="#767676"/></radialGradient>
<linearGradient id="torso" x1="0.2" y1="0" x2="0.9" y2="0.8"><stop offset="0" stop-color="#e8b484"/><stop offset="0.45" stop-color="#cf8c55"/><stop offset="1" stop-color="#6a3418"/></linearGradient>
</defs>
<rect x="0" y="0" width="223" height="226" fill="#050303"/>
<!-- face -->
<path d="M82 38 C86 26 102 22 118 24 C134 26 144 36 142 52 C141 66 136 78 126 86 C116 90 104 88 98 82 C92 74 84 60 82 38Z" fill="#2a130b" filter="url(#bl3)"/>
<ellipse cx="104" cy="66" rx="11" ry="9" fill="#7a3c24" filter="url(#bl3)"/>
<ellipse cx="112" cy="58" rx="12" ry="7" fill="#52261a" filter="url(#bl3)"/>
<ellipse cx="122" cy="78" rx="10" ry="8" fill="#5a2c1a" filter="url(#bl3)"/>
<ellipse cx="139" cy="38" rx="4" ry="7" fill="#3a1c12" filter="url(#bl2)"/>
<!-- torso -->
<path d="M106 92 L124 84 L146 98 L154 118 L153 150 L146 170 L130 184 L116 200 L108 224 L92 224 L96 204 L106 184 L110 160 L106 140 L102 120 Z" fill="#8a4c24" filter="url(#bl3)"/>
<ellipse cx="128" cy="112" rx="22" ry="18" fill="#e8b484" filter="url(#bl5)" opacity="0.95"/>
<ellipse cx="118" cy="150" rx="13" ry="20" fill="#d89860" filter="url(#bl5)" opacity="0.9"/>
<ellipse cx="140" cy="150" rx="10" ry="22" fill="#6a3418" filter="url(#bl5)" opacity="0.8"/>
<ellipse cx="70" cy="112" rx="20" ry="14" fill="#b87040" filter="url(#bl5)" opacity="0.9"/>
<ellipse cx="150" cy="84" rx="14" ry="16" fill="#c88850" filter="url(#bl5)" opacity="0.9"/>
<ellipse cx="98" cy="104" rx="8" ry="10" fill="#c08048" filter="url(#bl3)" opacity="0.9"/>
<!-- right arm dark + rim light -->
<path d="M152 100 C168 98 184 110 188 140 L186 190 L150 200 C152 180 158 160 155 140Z" fill="#070403" filter="url(#bl2)"/>
<path d="M157 128 C160 140 160 154 156 164 L154 164 C156 152 156 140 154 130Z" fill="#8a4a24" filter="url(#bl1)"/>
<ellipse cx="163" cy="100" rx="8" ry="5" fill="#3a1e10" filter="url(#bl3)"/>
<!-- bottom glow -->
<ellipse cx="98" cy="208" rx="5" ry="13" fill="#8a4a22" filter="url(#bl3)"/>
<path d="M70 160 L104 150 L112 186 L100 200 L84 198Z" fill="#090504" filter="url(#bl3)"/>
<!-- balls -->
<circle cx="159.8" cy="59" r="10.5" fill="url(#bg)" filter="url(#bl1)"/>
<circle cx="151.8" cy="77" r="11.5" fill="url(#bp)" filter="url(#bl1)"/>
<circle cx="138" cy="91.6" r="12.5" fill="url(#bw)" filter="url(#bl1)"/>
<circle cx="99.9" cy="92.7" r="10.5" fill="url(#bg)" filter="url(#bl1)"/>
<circle cx="101" cy="92" r="6" fill="#f4f4f4" filter="url(#bl2)" opacity="0.7"/>
<circle cx="60" cy="108" r="14" fill="url(#bp)" filter="url(#bl1)"/>
<circle cx="30.9" cy="118.8" r="12" fill="url(#bg)" filter="url(#bl1)"/>
<circle cx="87.9" cy="124.3" r="11.5" fill="url(#bp)" filter="url(#bl1)"/>
<circle cx="89" cy="124" r="6" fill="#ddd" filter="url(#bl2)" opacity="0.5"/>
<circle cx="121.6" cy="125.4" r="13" fill="url(#bw)" filter="url(#bl1)"/>
<circle cx="105.3" cy="138.8" r="9" fill="url(#bw)" filter="url(#bl1)"/>
<circle cx="29" cy="147.9" r="11" fill="url(#bp)" filter="url(#bl1)"/>
<circle cx="58" cy="157" r="8.5" fill="url(#bw)" filter="url(#bl1)"/>
<circle cx="43.6" cy="147" r="12" fill="url(#bg)" filter="url(#bl1)"/>
<circle cx="89" cy="188.5" r="11" fill="url(#bw)" filter="url(#bl1)"/>
<!-- hand silhouette -->
<path d="M50 108 C50 102 56 101 58 107 L63 126 C67 134 76 138 84 135 C92 130 97 120 100 116 C104 112 108 116 105 122 C101 134 100 146 102 156 C103 164 106 170 109 176 L88 182 C82 174 72 170 67 162 C60 152 54 142 52 130 Z" fill="#140a07" filter="url(#bl1)"/>
<path d="M61 104 C63 98 68 99 69 105 L73 126 L65 128Z" fill="#140a07" filter="url(#bl1)"/>
<!-- inner margin lines -->
<rect x="12.5" y="15.5" width="194" height="194" fill="none" stroke="#6a4a52" stroke-width="1" opacity="0.7"/>
<path d="M219.5 3V222" stroke="#3a3a3a" stroke-width="1" stroke-dasharray="2 1"/>
<path d="M0 222.5H220" stroke="#3a3a3a" stroke-width="1" stroke-dasharray="2 1"/>
</svg><div class="a" style="left:761px;top:301px;width:1px;height:225px;background:#777;"></div><div class="a" style="left:544px;top:297px;width:15px;height:7.5px;background:#3d76d0;border-radius:3.7px;border:1px solid #c8c8c8;box-sizing:border-box"></div><svg class="a" style="left:546px;top:298px;" width="11" height="5" viewBox="0 0 11 5"><path d="M1.5 2.5h3.5M6 2.5h3.5" stroke="#fff" stroke-width="1.6" stroke-linecap="round"/><path d="M4 2.5h3" stroke="#cfe0ff" stroke-width="1"/></svg><div class="a" style="left:316px;top:594px;width:447px;height:24px;background:transparent;border:1px solid rgba(140,95,100,0.5);border-bottom:none;box-sizing:border-box"></div><div class="a" style="left:319px;top:597px;width:440px;height:21px;background:#fbfaf9;"></div><div class="a" style="left:539px;top:597px;width:1px;height:21px;background:#999;"></div><div class="a" style="left:332px;top:610px;width:194px;height:8px;background:transparent;border:1px solid #aaa;border-bottom:none;box-sizing:border-box"></div><div class="a" style="left:552px;top:610px;width:194px;height:8px;background:transparent;border:1px solid #aaa;border-bottom:none;box-sizing:border-box"></div><div class="a" style="left:759px;top:597px;width:2px;height:21px;background:#111;"></div>
<div class="a" style="left:838px;top:90px;width:347px;height:528px;background:#3a3a3a;"></div><div class="a" style="left:838px;top:579px;width:145px;height:39px;background:#4f4f4f;"></div><div class="a" style="left:983px;top:579px;width:47px;height:39px;background:#464646;"></div><div class="a" style="left:839px;top:102px;width:190px;height:477px;background:#4a4a4a;box-shadow:0 1px 5px 1px rgba(0,0,0,0.45)"></div><div class="a" style="left:839px;top:102px;width:190px;height:25px;background:#3c3c3c;"></div><div class="a" style="left:840px;top:103px;width:57px;height:24px;background:#4a4a4a;"></div><svg class="a" style="left:846px;top:111px;" width="7" height="10" viewBox="0 0 7 10"><path d="M1.5 3.5L3.5 1.5L5.5 3.5M1.5 6L3.5 8L5.5 6" fill="none" stroke="#bbb" stroke-width="1"/></svg><div class="t" style="left:856.6px;top:110px;font-size:11.5px;color:#f2f2f2;font-weight:bold;transform:scaleX(0.868);transform-origin:0 0;">Pages</div><div class="t" style="left:907px;top:110px;font-size:11px;color:#c4c4c4;font-weight:bold;width:26.5px;overflow:hidden">Layer</div><div class="t" style="left:943px;top:110px;font-size:11px;color:#c4c4c4;font-weight:bold;width:27px;overflow:hidden">Swatc</div><svg class="a" style="left:991px;top:110px;" width="11" height="9" viewBox="0 0 11 9"><path d="M1.5 1L5 4.5L1.5 8M6.5 1L10 4.5L6.5 8" fill="none" stroke="#d0d0d0" stroke-width="1.2"/></svg><div class="a" style="left:1007px;top:110px;width:1px;height:10px;background:#999;"></div><svg class="a" style="left:1013px;top:111px;" width="11" height="9" viewBox="0 0 11 9"><path d="M0 1h10M0 4h10M0 7h10" stroke="#bbb" stroke-width="1.3"/></svg><div class="t" style="left:843px;top:135px;font-size:10px;color:#e0e0e0;">[None]</div><div class="a" style="left:987px;top:131px;width:22px;height:21px;background:#fff;"></div><div class="t" style="left:843px;top:161px;font-size:10px;color:#e0e0e0;">A-Master</div><div class="a" style="left:965px;top:158px;width:44px;height:21px;background:#fff;"></div><div class="a" style="left:987px;top:158px;width:1px;height:21px;background:#999;"></div><div class="a" style="left:840px;top:184px;width:188px;height:1px;background:#525252;"></div><div class="a" style="left:928px;top:189px;width:1px;height:43px;background:#c8c8c8;"></div><div class="a" style="left:929px;top:195px;width:33px;height:33px;background:#fff;"></div><svg class="a" style="left:939px;top:188px;" width="11" height="6" viewBox="0 0 11 6"><path d="M0.5 0.5H10.5L5.5 5.5Z" fill="#c4c4c4"/></svg><div class="t" style="left:955px;top:196px;font-size:9px;color:#222;">A</div><div class="t" style="left:941px;top:235px;font-size:9px;color:#e0e0e0;">1</div><div class="a" style="left:928px;top:247px;width:1px;height:43px;background:#c8c8c8;"></div><div class="a" style="left:896px;top:254px;width:33px;height:32px;background:#8fc0ea;"></div><div class="a" style="left:929px;top:254px;width:33px;height:32px;background:#1a3f74;"></div><svg class="a" style="left:929px;top:254px;" width="33" height="32" viewBox="0 0 33 32"><g fill="#5a9be0"><circle cx="22" cy="11" r="2.5"/><circle cx="17" cy="15" r="2.2"/><circle cx="12" cy="17" r="2"/><circle cx="19" cy="19" r="2.3"/><circle cx="15" cy="22" r="1.8"/><circle cx="9" cy="20" r="1.8"/><circle cx="13" cy="27" r="1.5"/><circle cx="24" cy="15" r="1.5"/></g><g fill="#a9d0f5"><circle cx="21" cy="12" r="1.2"/><circle cx="18" cy="18" r="1.3"/><circle cx="13" cy="17" r="1"/></g></svg><div class="a" style="left:896px;top:254px;width:7px;height:8px;background:#fff;"></div><div class="a" style="left:955px;top:254px;width:7px;height:8px;background:#fff;"></div><div class="t" style="left:897px;top:255px;font-size:9px;color:#111;">A</div><div class="t" style="left:955.5px;top:255px;font-size:9px;color:#111;">A</div><div class="a" style="left:916px;top:291.5px;width:22px;height:11.5px;background:#3f7ed6;border-radius:1px"></div><div class="t" style="left:918.5px;top:293px;font-size:9px;color:#fff;font-weight:bold;">2&#8211;3</div><svg class="a" style="left:908px;top:281px;" width="12" height="18" viewBox="0 0 12 18"><path d="M2 1.5V14L5 11.5L7 16L9 15L7 10.5H11Z" fill="#111" stroke="#fff" stroke-width="1"/></svg><div class="a" style="left:928px;top:305px;width:1px;height:43px;background:#c8c8c8;"></div><div class="a" style="left:896px;top:312px;width:33px;height:32px;background:#fff;"></div><div class="a" style="left:929px;top:312px;width:33px;height:32px;background:#fff;"></div><div class="a" style="left:928px;top:312px;width:1px;height:32px;background:#aaa;"></div><div class="t" style="left:897px;top:313px;font-size:9px;color:#222;">A</div><div class="t" style="left:955.5px;top:313px;font-size:9px;color:#222;">A</div><div class="t" style="left:919px;top:351px;font-size:9px;color:#e0e0e0;">4&#8211;5</div><div class="a" style="left:928px;top:363px;width:1px;height:43px;background:#c8c8c8;"></div><div class="a" style="left:896px;top:370px;width:33px;height:32px;background:#fff;"></div><div class="a" style="left:929px;top:370px;width:33px;height:32px;background:#fff;"></div><div class="a" style="left:928px;top:370px;width:1px;height:32px;background:#aaa;"></div><div class="t" style="left:897px;top:371px;font-size:9px;color:#222;">A</div><div class="t" style="left:955.5px;top:371px;font-size:9px;color:#222;">A</div><div class="t" style="left:919px;top:409px;font-size:9px;color:#e0e0e0;">6&#8211;7</div><div class="a" style="left:928px;top:422px;width:1px;height:43px;background:#c8c8c8;"></div><div class="a" style="left:896px;top:429px;width:33px;height:32px;background:#fff;"></div><div class="a" style="left:929px;top:429px;width:33px;height:32px;background:#fff;"></div><div class="a" style="left:928px;top:429px;width:1px;height:32px;background:#aaa;"></div><div class="t" style="left:897px;top:430px;font-size:9px;color:#222;">A</div><div class="t" style="left:955.5px;top:430px;font-size:9px;color:#222;">A</div><div class="t" style="left:919px;top:468px;font-size:9px;color:#e0e0e0;">8&#8211;9</div><div class="a" style="left:928px;top:480px;width:1px;height:43px;background:#c8c8c8;"></div><div class="a" style="left:896px;top:487px;width:32px;height:32px;background:#fff;"></div><div class="t" style="left:897px;top:488px;font-size:9px;color:#222;">A</div><div class="t" style="left:906px;top:527px;font-size:9px;color:#e0e0e0;">10</div><div class="t" style="left:845.5px;top:558px;font-size:10px;color:#e4e4e4;transform:scaleX(0.964);transform-origin:0 0;">10 Pages in 6 Spre...</div><svg class="a" style="left:944px;top:555px;" width="17" height="14" viewBox="0 0 17 14"><path d="M0.5 4.5H7V12.5H0.5ZM4 4.5V1.5H9L11.5 4V10.5H7M9 1.5V4H11.5" fill="none" stroke="#bbb" stroke-width="1"/><rect x="14" y="12" width="1.5" height="1.5" fill="#bbb"/></svg><svg class="a" style="left:971px;top:555px;" width="11" height="11" viewBox="0 0 11 11"><path d="M0.5 0.5H10.5V10.5H4L0.5 7Z" fill="#bbb"/><path d="M0.5 7H4V10.5" fill="#4a4a4a" stroke="#4a4a4a" stroke-width="0.5"/><path d="M0.5 7H4V10.5Z" fill="#888"/></svg><svg class="a" style="left:997px;top:554px;" width="10" height="13" viewBox="0 0 10 13"><path d="M1.5 3.5H8.5V12H1.5ZM0.5 3.5H9.5M3.5 3V1.5H6.5V3M3.5 5.5V10M5 5.5V10M6.5 5.5V10" fill="none" stroke="#bbb" stroke-width="1"/></svg><svg class="a" style="left:840px;top:573px;" width="188" height="2" viewBox="0 0 188 2"><path d="M0 1H188" stroke="#333" stroke-width="1" stroke-dasharray="1 1"/></svg><div class="a" style="left:925px;top:575px;width:18px;height:2px;background:transparent;background-image:repeating-linear-gradient(90deg,#5c5c5c 0 1px,transparent 1px 2px)"></div>
<div class="a" style="left:1030px;top:101px;width:151px;height:517px;background:#484848;"></div><svg class="a" style="left:1167px;top:92px;" width="10" height="8" viewBox="0 0 10 8"><path d="M4 1L1.5 3.5L4 6M8.5 1L6 3.5L8.5 6" fill="none" stroke="#c8c8c8" stroke-width="1.1"/></svg><div class="a" style="left:1030px;top:100px;width:1px;height:518px;background:#333;"></div><div class="a" style="left:1096px;top:104px;width:18px;height:4px;background:transparent;background-image:repeating-linear-gradient(90deg,#5c5c5c 0 1px,transparent 1px 2px)"></div><div class="a" style="left:1035px;top:112.5px;width:140px;height:19.5px;background:#303030;border-radius:2px;background-image:radial-gradient(#3c3c3c 0.5px,transparent 0.6px);background-size:2px 2px"></div><div class="t" style="left:1064.5px;top:117.3px;font-size:12px;color:#f0f0f0;font-weight:bold;transform:scaleX(0.829);transform-origin:0 0;">Pages</div><div class="t" style="left:1064.5px;top:143.8px;font-size:12px;color:#f0f0f0;font-weight:bold;transform:scaleX(0.855);transform-origin:0 0;">Layers</div><div class="t" style="left:1064.5px;top:169.3px;font-size:12px;color:#f0f0f0;font-weight:bold;transform:scaleX(0.845);transform-origin:0 0;">Swatches</div><div class="t" style="left:1064.5px;top:206.8px;font-size:12px;color:#f0f0f0;font-weight:bold;transform:scaleX(0.853);transform-origin:0 0;">Glyphs</div><div class="t" style="left:1064.5px;top:232.3px;font-size:12px;color:#f0f0f0;font-weight:bold;transform:scaleX(0.907);transform-origin:0 0;">Text Wrap</div><div class="t" style="left:1064.5px;top:269.3px;font-size:12px;color:#f0f0f0;font-weight:bold;transform:scaleX(0.870);transform-origin:0 0;">Stroke</div><div class="t" style="left:1064.5px;top:294.8px;font-size:12px;color:#f0f0f0;font-weight:bold;transform:scaleX(0.890);transform-origin:0 0;">Gradient</div><div class="t" style="left:1064.5px;top:332.3px;font-size:12px;color:#f0f0f0;font-weight:bold;transform:scaleX(0.851);transform-origin:0 0;">Story</div><div class="t" style="left:1064.5px;top:357.8px;font-size:12px;color:#f0f0f0;font-weight:bold;transform:scaleX(0.893);transform-origin:0 0;">Hyperlinks</div><div class="t" style="left:1064.5px;top:383.3px;font-size:12px;color:#f0f0f0;font-weight:bold;transform:scaleX(0.835);transform-origin:0 0;">Effects</div><div class="t" style="left:1064.5px;top:420.8px;font-size:12px;color:#f0f0f0;font-weight:bold;transform:scaleX(0.869);transform-origin:0 0;">Paragraph</div><div class="t" style="left:1064.5px;top:446.3px;font-size:12px;color:#f0f0f0;font-weight:bold;transform:scaleX(0.874);transform-origin:0 0;">Paragraph Styles</div><div class="t" style="left:1064.5px;top:483.8px;font-size:12px;color:#f0f0f0;font-weight:bold;transform:scaleX(0.875);transform-origin:0 0;">Character</div><div class="t" style="left:1064.5px;top:509.3px;font-size:12px;color:#f0f0f0;font-weight:bold;transform:scaleX(0.874);transform-origin:0 0;">Character Styles</div><div class="a" style="left:1031px;top:189px;width:150px;height:1px;background:#3a3a3a;"></div><div class="a" style="left:1031px;top:190px;width:150px;height:1px;background:#505050;"></div><div class="a" style="left:1096px;top:194px;width:18px;height:4px;background:transparent;background-image:repeating-linear-gradient(90deg,#5c5c5c 0 1px,transparent 1px 2px)"></div><div class="a" style="left:1031px;top:252px;width:150px;height:1px;background:#3a3a3a;"></div><div class="a" style="left:1031px;top:253px;width:150px;height:1px;background:#505050;"></div><div class="a" style="left:1096px;top:257px;width:18px;height:4px;background:transparent;background-image:repeating-linear-gradient(90deg,#5c5c5c 0 1px,transparent 1px 2px)"></div><div class="a" style="left:1031px;top:315px;width:150px;height:1px;background:#3a3a3a;"></div><div class="a" style="left:1031px;top:316px;width:150px;height:1px;background:#505050;"></div><div class="a" style="left:1096px;top:320px;width:18px;height:4px;background:transparent;background-image:repeating-linear-gradient(90deg,#5c5c5c 0 1px,transparent 1px 2px)"></div><div class="a" style="left:1031px;top:404px;width:150px;height:1px;background:#3a3a3a;"></div><div class="a" style="left:1031px;top:405px;width:150px;height:1px;background:#505050;"></div><div class="a" style="left:1096px;top:409px;width:18px;height:4px;background:transparent;background-image:repeating-linear-gradient(90deg,#5c5c5c 0 1px,transparent 1px 2px)"></div><div class="a" style="left:1031px;top:467px;width:150px;height:1px;background:#3a3a3a;"></div><div class="a" style="left:1031px;top:468px;width:150px;height:1px;background:#505050;"></div><div class="a" style="left:1096px;top:472px;width:18px;height:4px;background:transparent;background-image:repeating-linear-gradient(90deg,#5c5c5c 0 1px,transparent 1px 2px)"></div><div class="a" style="left:1031px;top:530px;width:150px;height:1px;background:#3a3a3a;"></div><div class="a" style="left:1031px;top:531px;width:150px;height:1px;background:#505050;"></div><svg class="a" style="left:1040px;top:115px;" width="17" height="16" viewBox="0 0 17 16"><path d="M0.5 4L7.5 2V14H0.5ZM16 4L9 2V14H16Z" fill="#cfcfcf"/><path d="M8.25 0V16" stroke="#cfcfcf" stroke-width="1"/></svg><svg class="a" style="left:1040px;top:142px;" width="16" height="16" viewBox="0 0 16 16"><path d="M8 1L15.5 5.5L8 10L0.5 5.5Z" fill="#cfcfcf"/><path d="M1 9.5L8 13.5L15 9.5" fill="none" stroke="#cfcfcf" stroke-width="1.6"/></svg><svg class="a" style="left:1040px;top:169px;" width="16" height="12" viewBox="0 0 16 12"><rect x="0" y="0" width="16" height="11" fill="#cfcfcf" opacity="0.55"/><rect x="1" y="1" width="4" height="4" fill="#777"/><rect x="6" y="1" width="4" height="4" fill="#cfcfcf"/><rect x="11" y="1" width="4" height="4" fill="#888"/><rect x="1" y="6" width="4" height="4" fill="#cfcfcf"/><rect x="6" y="6" width="4" height="4" fill="#666"/><rect x="11" y="6" width="4" height="4" fill="#cfcfcf"/></svg><svg class="a" style="left:1039px;top:203px;" width="18" height="18" viewBox="0 0 18 18"><text x="1" y="15" font-family="Liberation Serif,serif" font-style="italic" font-size="18" fill="#cfcfcf">A</text><path d="M2 4.5h6" stroke="#cfcfcf" stroke-width="0.8"/></svg><svg class="a" style="left:1040px;top:232px;" width="16" height="13" viewBox="0 0 16 13"><path d="M0 1h16M0 3.5h3M13 3.5h3M0 6h2.5M13.5 6h2.5M0 8.5h3M13 8.5h3M0 11h16" stroke="#cfcfcf" stroke-width="1"/><circle cx="8" cy="6" r="4" fill="#cfcfcf"/></svg><svg class="a" style="left:1040px;top:268px;" width="17" height="13" viewBox="0 0 17 13"><path d="M0 1.5h16M0 6h16M0 11h16" stroke="#cfcfcf" stroke-width="1.5"/><path d="M0 11h16" stroke="#cfcfcf" stroke-width="2.5"/></svg><svg class="a" style="left:1040px;top:294px;" width="17" height="12" viewBox="0 0 17 12"><defs><linearGradient id="dg1"><stop offset="0" stop-color="#4a4a4a"/><stop offset="1" stop-color="#d8d8d8"/></linearGradient></defs><rect x="0.5" y="0.5" width="15" height="10.5" fill="url(#dg1)" stroke="#cfcfcf"/></svg><svg class="a" style="left:1041px;top:330px;" width="15" height="16" viewBox="0 0 15 16"><rect x="0.5" y="0.5" width="13.5" height="15" fill="#c6c6c6" stroke="#e0e0e0"/><path d="M3 7.5h8.5M3 10h8.5M3 12.5h8.5" stroke="#555" stroke-width="1"/><path d="M3 3.5h4M5 3.5v2.5M8.5 5h2.5" stroke="#444" stroke-width="1"/></svg><svg class="a" style="left:1039px;top:355px;" width="19" height="18" viewBox="0 0 19 18"><circle cx="7" cy="7" r="6" fill="#cfcfcf"/><path d="M4 3c2 1 1 3 3 3s1 3 -1 4M9 2c-1 2 2 2 3 4" stroke="#484848" stroke-width="1.5" fill="none"/><path d="M10 8l2 0 1 2 1.5-1 1.5 4 -1 3 -3.5 0 -2-4z" fill="#cfcfcf" stroke="#484848" stroke-width="0.8"/></svg><svg class="a" style="left:1041px;top:380px;" width="17" height="18" viewBox="0 0 17 18"><text x="0" y="14" font-family="Liberation Serif,serif" font-style="italic" font-size="17" fill="#cfcfcf">f</text><text x="6.5" y="14" font-family="Liberation Sans,sans-serif" font-size="12" fill="#cfcfcf">x</text></svg><svg class="a" style="left:1042px;top:419px;" width="12" height="15" viewBox="0 0 12 15"><path d="M6 0.5H11.5M7 0.5V14.5M10.5 0.5V14.5" stroke="#cfcfcf" stroke-width="1.3" fill="none"/><path d="M7 0.5A4 4 0 0 0 7 8.5Z" fill="#cfcfcf"/></svg><svg class="a" style="left:1039px;top:443px;" width="17" height="17" viewBox="0 0 17 17"><g transform="translate(7,0) scale(0.8)"><path d="M6 0.5H11.5M7 0.5V14.5M10.5 0.5V14.5" stroke="#cfcfcf" stroke-width="1.4" fill="none"/><path d="M7 0.5A4 4 0 0 0 7 8.5Z" fill="#cfcfcf"/></g><rect x="0.5" y="9.5" width="5" height="5" fill="none" stroke="#cfcfcf"/><rect x="3" y="12" width="4.5" height="4.5" fill="#484848" stroke="#cfcfcf"/></svg><svg class="a" style="left:1040px;top:480px;" width="17" height="18" viewBox="0 0 17 18"><text x="0" y="15" font-family="Liberation Sans,sans-serif" font-size="18" fill="#cfcfcf">A</text><path d="M14.5 1V17" stroke="#cfcfcf" stroke-width="1.2"/></svg><svg class="a" style="left:1039px;top:505px;" width="18" height="18" viewBox="0 0 18 18"><text x="6.5" y="11" font-family="Liberation Sans,sans-serif" font-size="14" fill="#cfcfcf">A</text><rect x="0.5" y="9.5" width="5" height="5" fill="none" stroke="#cfcfcf"/><rect x="3" y="12" width="4.5" height="4.5" fill="#484848" stroke="#cfcfcf"/></svg>
<div class="a" style="left:14px;top:13px;width:1171px;height:605px;background:transparent;background:linear-gradient(to bottom,rgba(0,0,0,0) 0,rgba(0,0,0,0) 360px,rgba(0,0,0,0.225) 605px);pointer-events:none"></div><div class="a" style="left:1181px;top:13px;width:4px;height:605px;background:#0a0a0a;"></div>
<div class="t" dir="rtl" style="top:565px;width:160px;left:966px;font-family:'DejaVu Sans',sans-serif;font-weight:bold;font-size:23px;line-height:28px;text-align:right;direction:rtl;color:#4d94e0;transform:scaleX(0.81);transform-origin:100% 0">عرب سيد<span style="color:#111">ناعم</span></div><div class="t" style="left:1007px;top:587px;font-weight:bold;font-size:19.5px;line-height:20px;color:#151515;-webkit-text-stroke:0.5px;transform:scaleX(0.757);transform-origin:0 0"><span style="color:#4d94e0">A<span style="font-size:16px">RAB</span></span> S<span style="font-size:16px">EED</span> S<span style="font-size:16px">OFT</span></div><svg class="a" style="left:1133px;top:568px;" width="42" height="43" viewBox="0 0 42 43"><defs><linearGradient id="lg1" x1="0.3" y1="0" x2="0.1" y2="1"><stop offset="0" stop-color="#ffffff"/><stop offset="0.55" stop-color="#e8eef5"/><stop offset="0.8" stop-color="#8dbdf2"/><stop offset="1" stop-color="#3f86dc"/></linearGradient></defs>
<path d="M20 0.5 C31 0.5 40.5 9 40.5 20 C40.5 30 30 37 19 42 C8 36 0.5 30 0.5 20 C0.5 9 9 0.5 20 0.5Z" fill="#0a0a0a"/>
<path d="M20 0.5 C9 0.5 0.5 9 0.5 20 C0.5 29 7 37 17 41.5 C10 35 6 28 6 20 C6 11 13 4.5 22 4 C26 4 29 5 31.5 6.5 C28 2.5 24 0.5 20 0.5Z" fill="url(#lg1)"/>
<path d="M23 1.5 C31 3.5 36 9 38 16 C35 10 30 5.5 24 3.5Z" fill="#2f6fc0"/>
<circle cx="20.2" cy="19.7" r="13.6" fill="#383838" stroke="#3f86dc" stroke-width="1.4"/>
<path d="M18 10.5h4.5v6h3l-5.2 5.5l-5.2-5.5h2.9z" fill="#3f86dc"/>
<path d="M12.5 22v4.5h15.5v-4.5" fill="none" stroke="#3f86dc" stroke-width="2.2"/></svg><div class="t" style="left:1169px;top:596px;font-size:4px;color:#bbb;">.org</div>
</div></div>
</body></html>
